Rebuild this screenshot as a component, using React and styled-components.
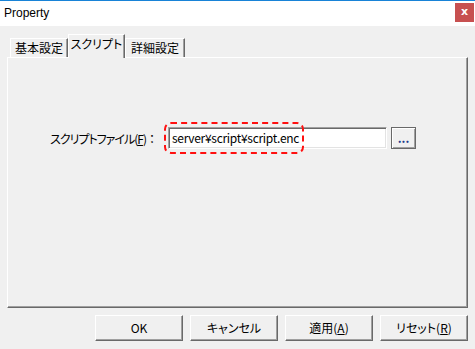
import React from 'react';
import styled, { createGlobalStyle } from 'styled-components';

const GlobalStyle = createGlobalStyle`
  body {
    margin: 0;
    background: #f0f0f0;
    font-family: "Noto Sans CJK JP", "Noto Sans", sans-serif;
    font-size: 12px;
    color: #000;
  }
`;

const Window = styled.div`
  width: 475px;
  height: 349px;
  display: flex;
  flex-direction: column;
  background: #f0f0f0;
  overflow: hidden;
`;

const TitleBar = styled.div`
  height: 25px;
  border-top: 1px solid #1883d7;
  background: #fff;
  display: flex;
  justify-content: space-between;
  align-items: flex-start;
  padding-left: 4px;
`;

const Title = styled.span`
  font-family: "Liberation Sans", "Noto Sans", sans-serif;
  font-size: 12px;
  line-height: 25px;
`;

const CloseButton = styled.div`
  width: 19px;
  height: 19px;
  margin-top: 2px;
  margin-right: 1px;
  background: #c75050;
  color: #fff;
  font-family: "DejaVu Sans", sans-serif;
  font-weight: bold;
  font-size: 11px;
  line-height: 17px;
  text-align: center;
`;

const Body = styled.div`
  flex: 1;
  padding: 8px 7px 0 7px;
`;

const TabStrip = styled.div`
  display: flex;
  align-items: flex-end;
  height: 23px;
  padding-left: 3px;
  position: relative;
  z-index: 1;
`;

const Tab = styled.div`
  box-sizing: border-box;
  width: ${p => p.$w}px;
  height: ${p => (p.$active ? 24 : 19)}px;
  margin-bottom: ${p => (p.$active ? -1 : 0)}px;
  background: #f0f0f0;
  border-top: 1px solid #fff;
  border-left: 1px solid #fff;
  border-right: 1px solid #696969;
  box-shadow: inset -1px 0 #a0a0a0;
  text-align: center;
  line-height: 18px;
  font-feature-settings: "palt";
  font-size: 12px;
`;

const Panel = styled.div`
  box-sizing: border-box;
  width: 461px;
  height: 251px;
  border-top: 1px solid #fff;
  border-left: 1px solid #fff;
  border-right: 1px solid #696969;
  border-bottom: 1px solid #696969;
  box-shadow: inset -1px -1px #a0a0a0;
  padding-top: 69px;
`;

const FieldRow = styled.div`
  display: flex;
  align-items: center;
`;

const Label = styled.label`
  width: 150px;
  margin-right: 10px;
  text-align: right;
  font-feature-settings: "palt";
  letter-spacing: -1px;
  font-size: 12px;
  white-space: nowrap;
`;

const Colon = styled.span`
  font-feature-settings: normal;
  letter-spacing: 0;
`;

const FieldWrap = styled.div`
  position: relative;
`;

const TextBox = styled.div`
  box-sizing: border-box;
  width: 219px;
  height: 22px;
  background: #fff;
  border-top: 1px solid #a0a0a0;
  border-left: 1px solid #a0a0a0;
  border-right: 1px solid #fff;
  border-bottom: 1px solid #fff;
  box-shadow: inset 1px 1px #696969, inset -1px -1px #e3e3e3;
  padding-left: 3px;
  line-height: 20px;
  font-size: 12px;
  font-family: "Noto Sans CJK JP", sans-serif;
  letter-spacing: -0.3px;
`;

const Highlight = styled.div`
  position: absolute;
  left: -4px;
  top: -5px;
  width: 140px;
  height: 32px;
  box-sizing: border-box;
  border: 2px dashed #ff1010;
  border-radius: 7px;
  pointer-events: none;
`;

const Button = styled.button`
  box-sizing: border-box;
  width: ${p => p.$w || 88}px;
  height: ${p => p.$h || 26}px;
  margin: 0;
  padding: 0;
  background: #f0f0f0;
  border-top: 1px solid #fff;
  border-left: 1px solid #fff;
  border-right: 1px solid #696969;
  border-bottom: 1px solid #696969;
  box-shadow: inset -1px -1px #a0a0a0;
  font-family: "Noto Sans CJK JP", "Noto Sans", sans-serif;
  font-feature-settings: "palt";
  font-size: 12px;
  color: #000;
  line-height: 1;
`;

const BrowseButton = styled(Button)`
  margin-left: 4px;
  border: 1px solid #696969;
  box-shadow: inset 1px 1px #fff, inset -1px -1px #a0a0a0;
  font-weight: bold;
  color: #1c3a8c;
`;

const ButtonRow = styled.div`
  display: flex;
  justify-content: flex-end;
  gap: 7px;
  margin-top: 7px;
`;

export default function App() {
  return (
    <Window>
      <GlobalStyle />
      <TitleBar>
        <Title>Property</Title>
        <CloseButton>x</CloseButton>
      </TitleBar>
      <Body>
        <TabStrip>
          <Tab $w={58}>基本設定</Tab>
          <Tab $w={57} $active>スクリプト</Tab>
          <Tab $w={60}>詳細設定</Tab>
        </TabStrip>
        <Panel>
          <FieldRow>
            <Label>スクリプトファイル(<u>F</u>)<Colon>：</Colon></Label>
            <FieldWrap>
              <TextBox>server¥script¥script.enc</TextBox>
              <Highlight />
            </FieldWrap>
            <BrowseButton $w={25} $h={22}>...</BrowseButton>
          </FieldRow>
        </Panel>
        <ButtonRow>
          <Button>OK</Button>
          <Button>キャンセル</Button>
          <Button>適用(<u>A</u>)</Button>
          <Button>リセット(<u>R</u>)</Button>
        </ButtonRow>
      </Body>
    </Window>
  );
}
